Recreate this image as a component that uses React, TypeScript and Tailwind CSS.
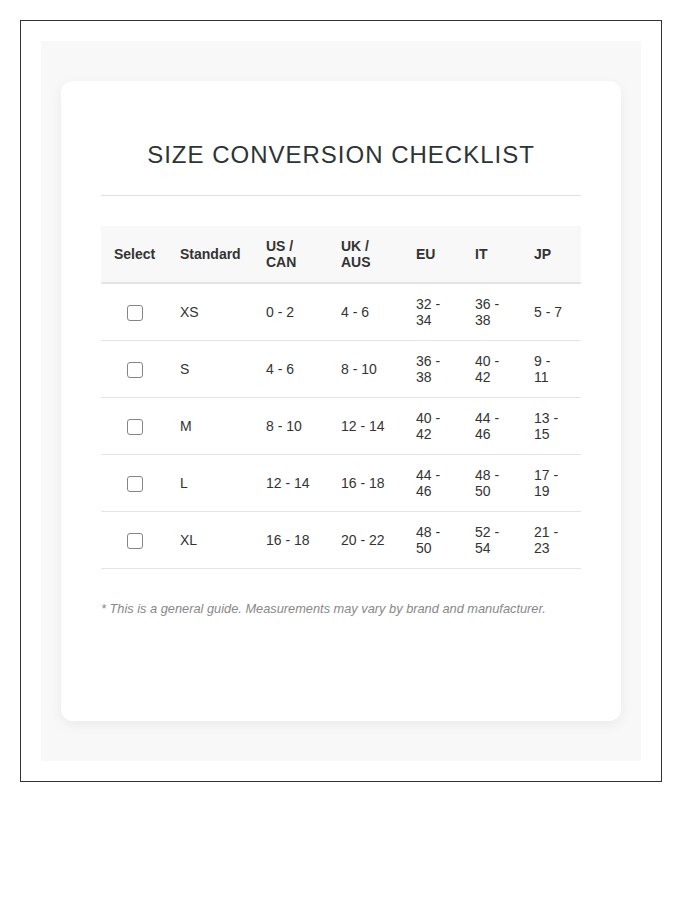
const rows = [
  { std: "XS", us: "0 - 2", uk: "4 - 6", eu: "32 - 34", it: "36 - 38", jp: "5 - 7" },
  { std: "S", us: "4 - 6", uk: "8 - 10", eu: "36 - 38", it: "40 - 42", jp: "9 - 11" },
  { std: "M", us: "8 - 10", uk: "12 - 14", eu: "40 - 42", it: "44 - 46", jp: "13 - 15" },
  { std: "L", us: "12 - 14", uk: "16 - 18", eu: "44 - 46", it: "48 - 50", jp: "17 - 19" },
  { std: "XL", us: "16 - 18", uk: "20 - 22", eu: "48 - 50", it: "52 - 54", jp: "21 - 23" },
];

export default function App() {
  return (
    <div className="min-h-[900px] bg-white font-['Liberation_Sans',Arial,sans-serif] text-[#333]">
      <div className="m-5 w-[642px] border border-[#333] p-5">
        <div className="h-[720px] bg-[#f8f8f8] px-5 py-10">
          <div className="h-[640px] rounded-xl bg-white px-10 pt-10 shadow-[0_4px_14px_rgba(0,0,0,0.06)]">
            <div className="border-b border-[#e0e0e0] pt-[19px] pb-[25px] text-center">
              <h1 className="text-[24px] leading-[30px] font-normal tracking-[1px] text-[#2d3436]">
                SIZE CONVERSION CHECKLIST
              </h1>
            </div>

            <table className="mt-[30px] w-[480px] table-fixed border-collapse text-[14px] leading-4">
              <colgroup>
                <col className="w-[67px]" />
                <col className="w-[86px]" />
                <col className="w-[75px]" />
                <col className="w-[75px]" />
                <col className="w-[59px]" />
                <col className="w-[59px]" />
                <col className="w-[59px]" />
              </colgroup>
              <thead>
                <tr className="border-b-2 border-[#e4e4e4] bg-[#f8f8f8] text-left font-bold text-[#333]">
                  <th className="px-3 py-3 text-center">Select</th>
                  <th className="px-3 py-3">Standard</th>
                  <th className="px-3 py-3">US /<br />CAN</th>
                  <th className="px-3 py-3">UK /<br />AUS</th>
                  <th className="px-3 py-3">EU</th>
                  <th className="px-3 py-3">IT</th>
                  <th className="px-3 py-3">JP</th>
                </tr>
              </thead>
              <tbody>
                {rows.map((r) => (
                  <tr key={r.std} className="h-[57px] border-b border-[#e4e4e4] align-middle">
                    <td className="px-3 py-3 text-center">
                      <input
                        type="checkbox"
                        className="m-0 inline-block h-4 w-4 appearance-none rounded-[3px] border border-[#858585] bg-white align-middle"
                      />
                    </td>
                    <td className="px-3 py-3">{r.std}</td>
                    <td className="px-3 py-3">{r.us}</td>
                    <td className="px-3 py-3">{r.uk}</td>
                    <td className="px-3 py-3">
                      <div className="max-w-[34px]">{r.eu}</div>
                    </td>
                    <td className="px-3 py-3">
                      <div className="max-w-[34px]">{r.it}</div>
                    </td>
                    <td className="px-3 py-3">
                      <div className="max-w-[34px]">{r.jp}</div>
                    </td>
                  </tr>
                ))}
              </tbody>
            </table>

            <p className="mt-[30px] text-[12.8px] italic text-[#888]">
              * This is a general guide. Measurements may vary by brand and manufacturer.
            </p>
          </div>
        </div>
      </div>
    </div>
  );
}
